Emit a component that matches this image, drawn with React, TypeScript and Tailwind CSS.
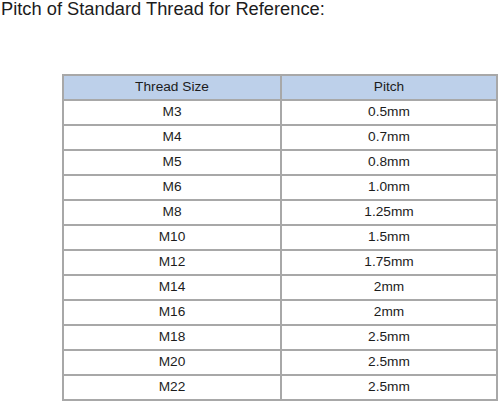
import React from "react";

const rows: [string, string][] = [
  ["M3", "0.5mm"],
  ["M4", "0.7mm"],
  ["M5", "0.8mm"],
  ["M6", "1.0mm"],
  ["M8", "1.25mm"],
  ["M10", "1.5mm"],
  ["M12", "1.75mm"],
  ["M14", "2mm"],
  ["M16", "2mm"],
  ["M18", "2.5mm"],
  ["M20", "2.5mm"],
  ["M22", "2.5mm"],
];

export default function App() {
  return (
    <div
      className="w-[500px] h-[402px] bg-white overflow-hidden text-[#1c1c1c]"
      style={{ fontFamily: '"Liberation Sans", Arial, sans-serif' }}
    >
      <p className="text-[18.3px] leading-[18.3px] pl-[1px] whitespace-nowrap">
        Pitch of Standard Thread for Reference:
      </p>
      <div className="ml-[62px] mt-[55.7px] w-[436px] border-t-2 border-l-2 border-[#a8a8a8] text-[13.7px]">
        <div className="grid grid-cols-[218px_216px] h-[25px] bg-[#bdd0ea]">
          <div className="border-r-2 border-b-2 border-[#a8a8a8] flex items-center justify-center">
            Thread Size
          </div>
          <div className="border-r-2 border-b-2 border-[#a8a8a8] flex items-center justify-center">
            Pitch
          </div>
        </div>
        {rows.map(([s, p]) => (
          <div key={s} className="grid grid-cols-[218px_216px] h-[25px]">
            <div className="border-r-2 border-b-2 border-[#a8a8a8] flex items-center justify-center">
              {s}
            </div>
            <div className="border-r-2 border-b-2 border-[#a8a8a8] flex items-center justify-center">
              {p}
            </div>
          </div>
        ))}
      </div>
    </div>
  );
}
